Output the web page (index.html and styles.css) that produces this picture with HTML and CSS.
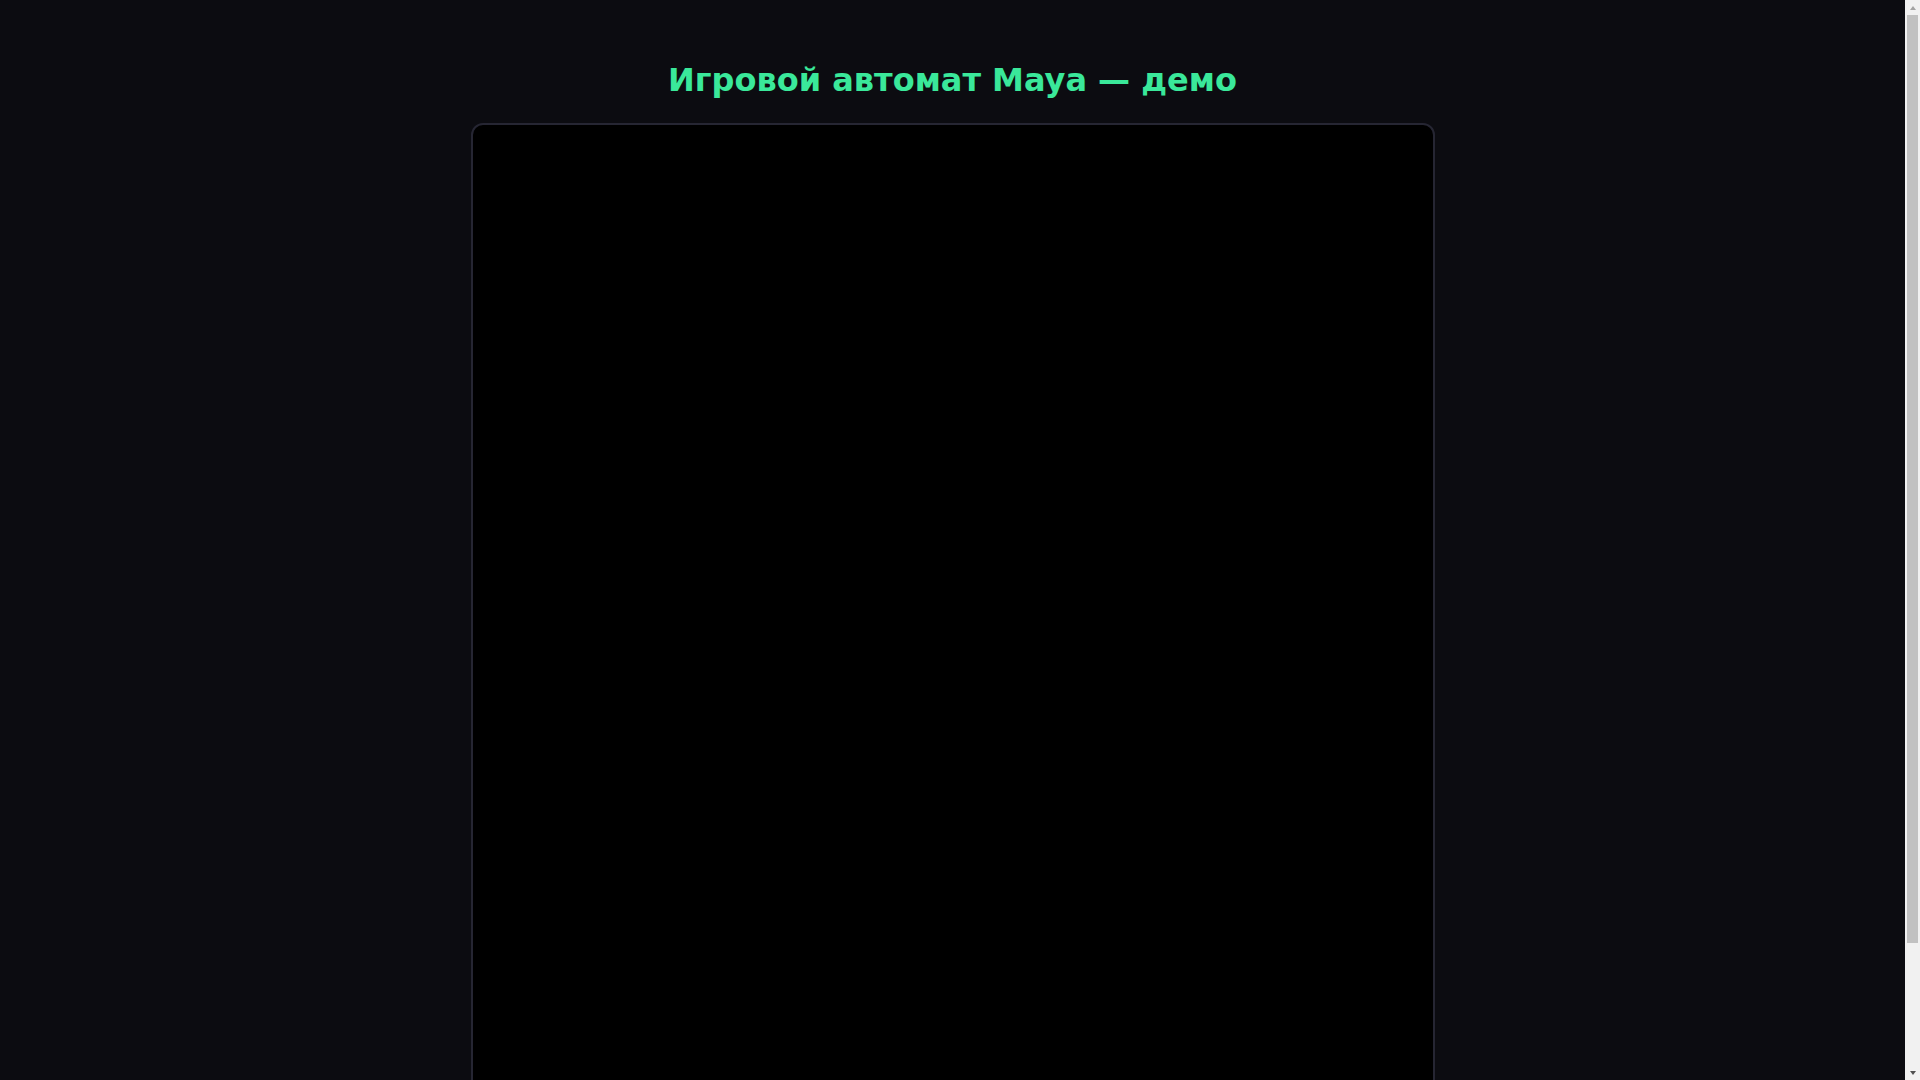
FILE: index.html
```html
<!DOCTYPE html>
<html lang="ru">
<head>
<meta charset="utf-8">
<title>Игровой автомат Maya — демо</title>
<link rel="stylesheet" href="styles.css">
</head>
<body>
<main class="page">
  <h1 class="title">Игровой автомат Maya — демо</h1>
  <div class="game-frame"></div>
</main>
<div class="scrollbar" aria-hidden="true">
  <div class="sb-arrow sb-up"></div>
  <div class="sb-track"><div class="sb-thumb"></div></div>
  <div class="sb-arrow sb-down"></div>
</div>
</body>
</html>
```
FILE: styles.css
```css
html, body {
  margin: 0;
  padding: 0;
  background: #0c0c11;
}
body {
  font-family: "DejaVu Sans", "Liberation Sans", sans-serif;
}
.page {
  display: flex;
  flex-direction: column;
  align-items: center;
  padding: 61px 35px 56px 20px;
}
.title {
  margin: 0 0 24px;
  font-size: 32px;
  font-weight: bold;
  line-height: normal;
  color: #3ae89a;
  text-align: center;
}
.game-frame {
  box-sizing: border-box;
  width: 964px;
  height: 1042px;
  background: #000;
  border: 2px solid #262633;
  border-radius: 12px;
}
.scrollbar {
  position: fixed;
  top: 0;
  right: 0;
  width: 15px;
  height: 100vh;
  background: #f1f1f1;
  display: flex;
  flex-direction: column;
}
.sb-arrow {
  height: 15px;
  flex: none;
  display: flex;
  align-items: center;
  justify-content: center;
}
.sb-up::before,
.sb-down::before {
  content: "";
  width: 0;
  height: 0;
  border-left: 3.5px solid transparent;
  border-right: 3.5px solid transparent;
}
.sb-up::before {
  border-bottom: 4px solid #a3a3a3;
}
.sb-down::before {
  border-top: 4px solid #505050;
}
.sb-track {
  flex: 1;
  padding: 0 2px;
}
.sb-thumb {
  height: 928px;
  background: #c1c1c1;
}
```
